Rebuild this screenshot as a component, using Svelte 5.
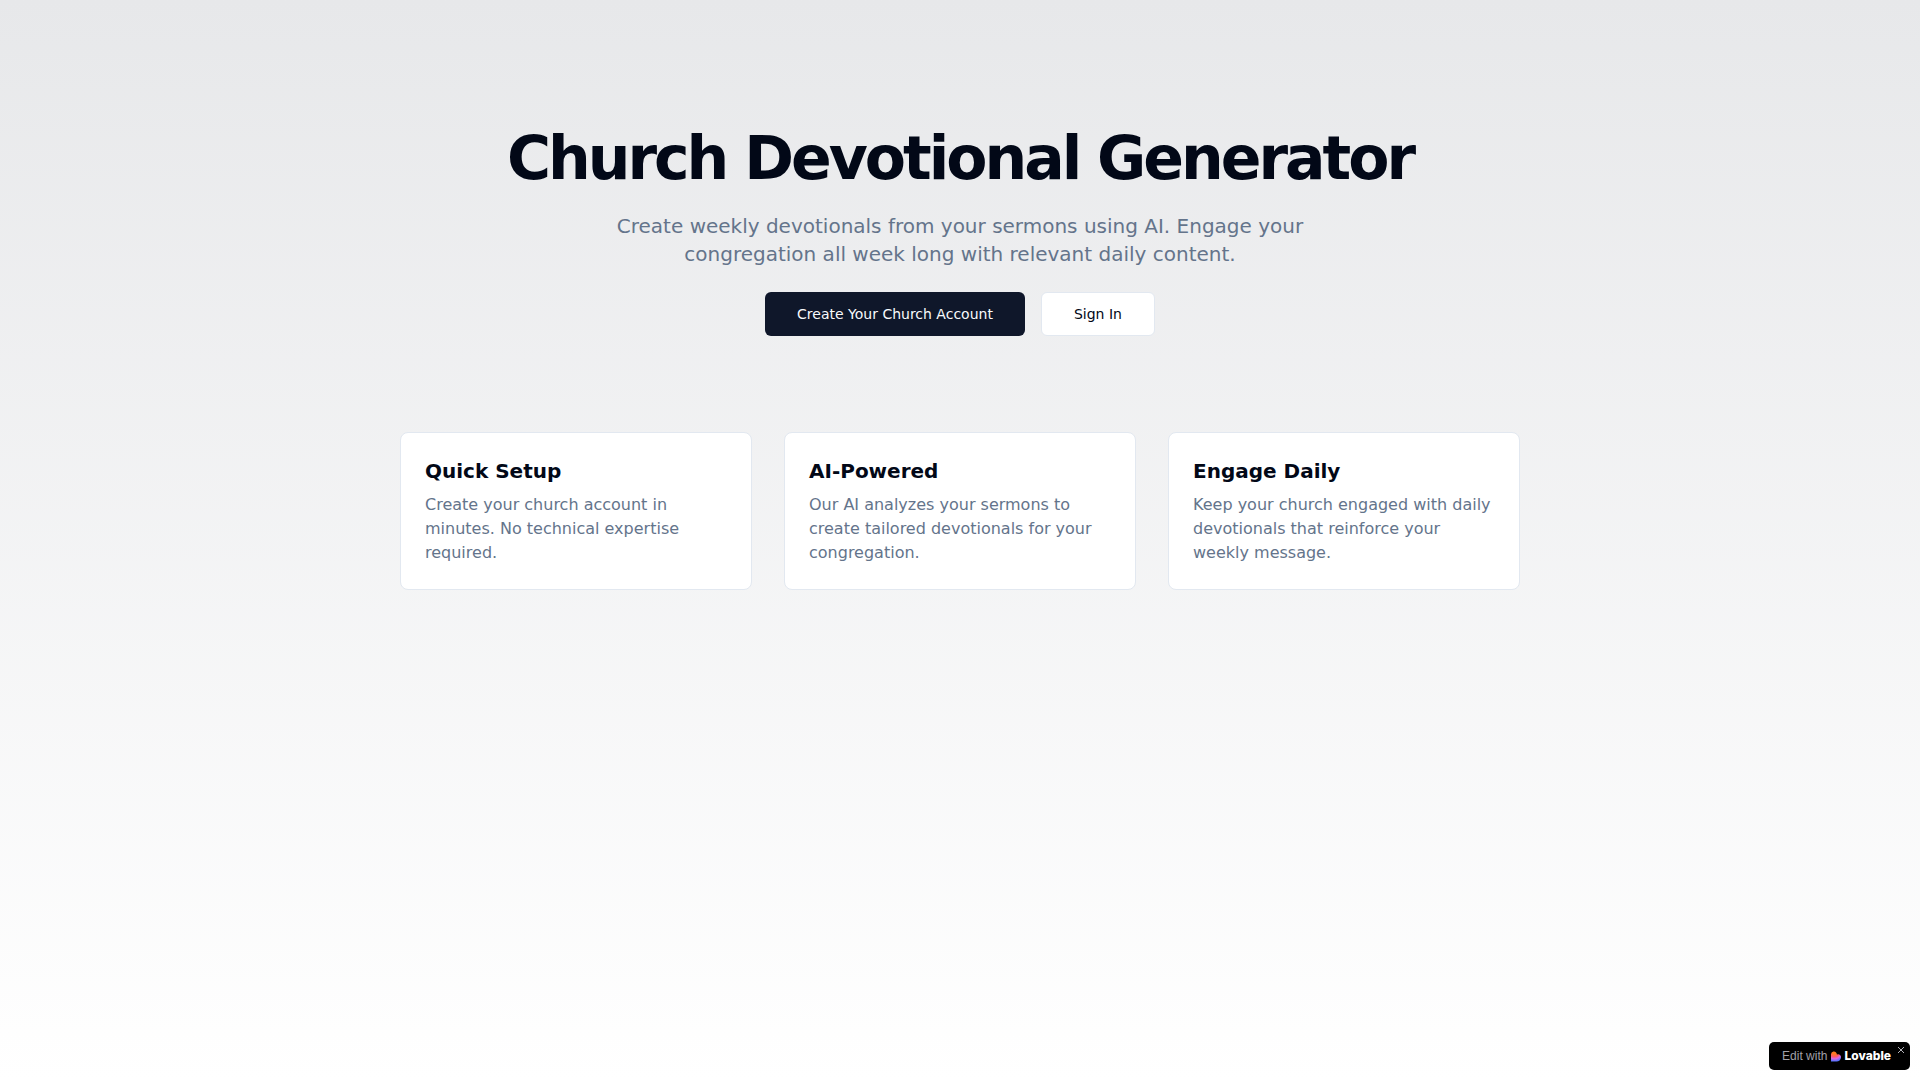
<script lang="ts">
	const features = [
		{
			title: 'Quick Setup',
			text: 'Create your church account in minutes. No technical expertise required.',
		},
		{
			title: 'AI-Powered',
			text: 'Our AI analyzes your sermons to create tailored devotionals for your congregation.',
		},
		{
			title: 'Engage Daily',
			text: 'Keep your church engaged with daily devotionals that reinforce your weekly message.',
		},
	];

	let badgeOpen = $state(true);
</script>

<main class="page">
	<div class="container">
		<section class="hero">
			<h1>Church Devotional Generator</h1>
			<p class="lead">
				Create weekly devotionals from your sermons using AI. Engage your
				congregation all week long with relevant daily content.
			</p>
			<div class="actions">
				<button type="button" class="btn primary">Create Your Church Account</button>
				<button type="button" class="btn outline">Sign In</button>
			</div>
		</section>

		<section class="features">
			{#each features as feature (feature.title)}
				<article class="card">
					<h3>{feature.title}</h3>
					<p>{feature.text}</p>
				</article>
			{/each}
		</section>
	</div>
</main>

{#if badgeOpen}
	<aside class="badge">
		<a class="badge-link" href="https://lovable.dev">
			<span class="badge-text">Edit with</span>
			<svg class="badge-logo" viewBox="0 0 20 22" aria-hidden="true">
				<defs>
					<radialGradient id="heart" cx="0.35" cy="0" r="1.05">
						<stop offset="0.25" stop-color="#ff7a1f" />
						<stop offset="0.5" stop-color="#ff5c66" />
						<stop offset="0.7" stop-color="#d868e8" />
						<stop offset="0.95" stop-color="#4b73ff" />
					</radialGradient>
				</defs>
				<path
					d="M0 6.500a5.800 5.800 0 0 1 11.200-2l.6 2.600a5 5 0 0 1 3.200-.6a6.200 6.200 0 0 1 4.500 8.500c-1 3.500-4 6-8 6H0z"
					fill="url(#heart)"
				/>
			</svg>
			<span class="badge-name">Lovable</span>
		</a>
		<button
			type="button"
			class="badge-close"
			aria-label="Close"
			onclick={() => (badgeOpen = false)}
		>
			<svg viewBox="0 0 8 8" aria-hidden="true">
				<path d="M1 1l6 6M7 1L1 7" stroke="currentColor" />
			</svg>
		</button>
	</aside>
{/if}

<style>
	:global(body) {
		background: #fff;
	}
	.page {
		box-sizing: border-box;
		min-height: 100vh;
		padding: 128px 32px 64px;
		background: linear-gradient(to bottom, #e7e8ea, #fff);
		font-family: "DejaVu Sans", sans-serif;
		color: #020817;
	}
	.container {
		display: flex;
		flex-direction: column;
		gap: 96px;
		max-width: 1120px;
		margin: 0 auto;
	}
	.hero {
		display: flex;
		flex-direction: column;
		align-items: center;
		gap: 24px;
		text-align: center;
	}
	h1,
	h3,
	p {
		margin: 0;
	}
	h1 {
		font-size: 60px;
		line-height: 60px;
		font-weight: 700;
		letter-spacing: -0.05em;
	}
	.lead {
		max-width: 700px;
		font-size: 20px;
		line-height: 28px;
		color: #64748b;
	}
	.actions {
		display: flex;
		flex-wrap: wrap;
		justify-content: center;
		gap: 16px;
	}
	.btn {
		height: 44px;
		padding: 0 32px;
		border: 0;
		border-radius: 6px;
		font-family: inherit;
		font-size: 14px;
		line-height: 20px;
		font-weight: 500;
		cursor: pointer;
	}
	.primary {
		background: #0f172a;
		color: #f8fafc;
	}
	.primary:hover {
		background: #273043;
	}
	.outline {
		border: 1px solid #e2e8f0;
		background: #fff;
		color: #020817;
	}
	.outline:hover {
		background: #f1f5f9;
	}
	.features {
		display: grid;
		grid-template-columns: repeat(auto-fit, minmax(280px, 1fr));
		gap: 32px;
	}
	.card {
		padding: 24px;
		border: 1px solid #e2e8f0;
		border-radius: 8px;
		background: #fff;
	}
	.card h3 {
		margin-bottom: 8px;
		font-size: 20px;
		line-height: 28px;
		font-weight: 600;
	}
	.card p {
		font-size: 16px;
		line-height: 24px;
		color: #64748b;
	}
	.badge {
		position: fixed;
		right: 10px;
		bottom: 10px;
		display: flex;
		border-radius: 5px;
		background: #000;
		font-family: "Liberation Sans", Arial, sans-serif;
	}
	.badge-link {
		display: flex;
		align-items: center;
		height: 28px;
		padding: 0 19px 0 13px;
		font-size: 12px;
		line-height: 16px;
		text-decoration: none;
	}
	.badge-text {
		color: #a1a1aa;
	}
	.badge-logo {
		width: 10px;
		height: 11px;
		margin: 0 3px 0 4px;
	}
	.badge-name {
		font-family: Inter, sans-serif;
		font-weight: 800;
		color: #fff;
	}
	.badge-close {
		position: absolute;
		top: 3px;
		right: 4px;
		display: flex;
		padding: 1px;
		border: 0;
		background: none;
		color: #b4b4ba;
		cursor: pointer;
	}
	.badge-close svg {
		width: 8px;
		height: 8px;
	}
</style>
